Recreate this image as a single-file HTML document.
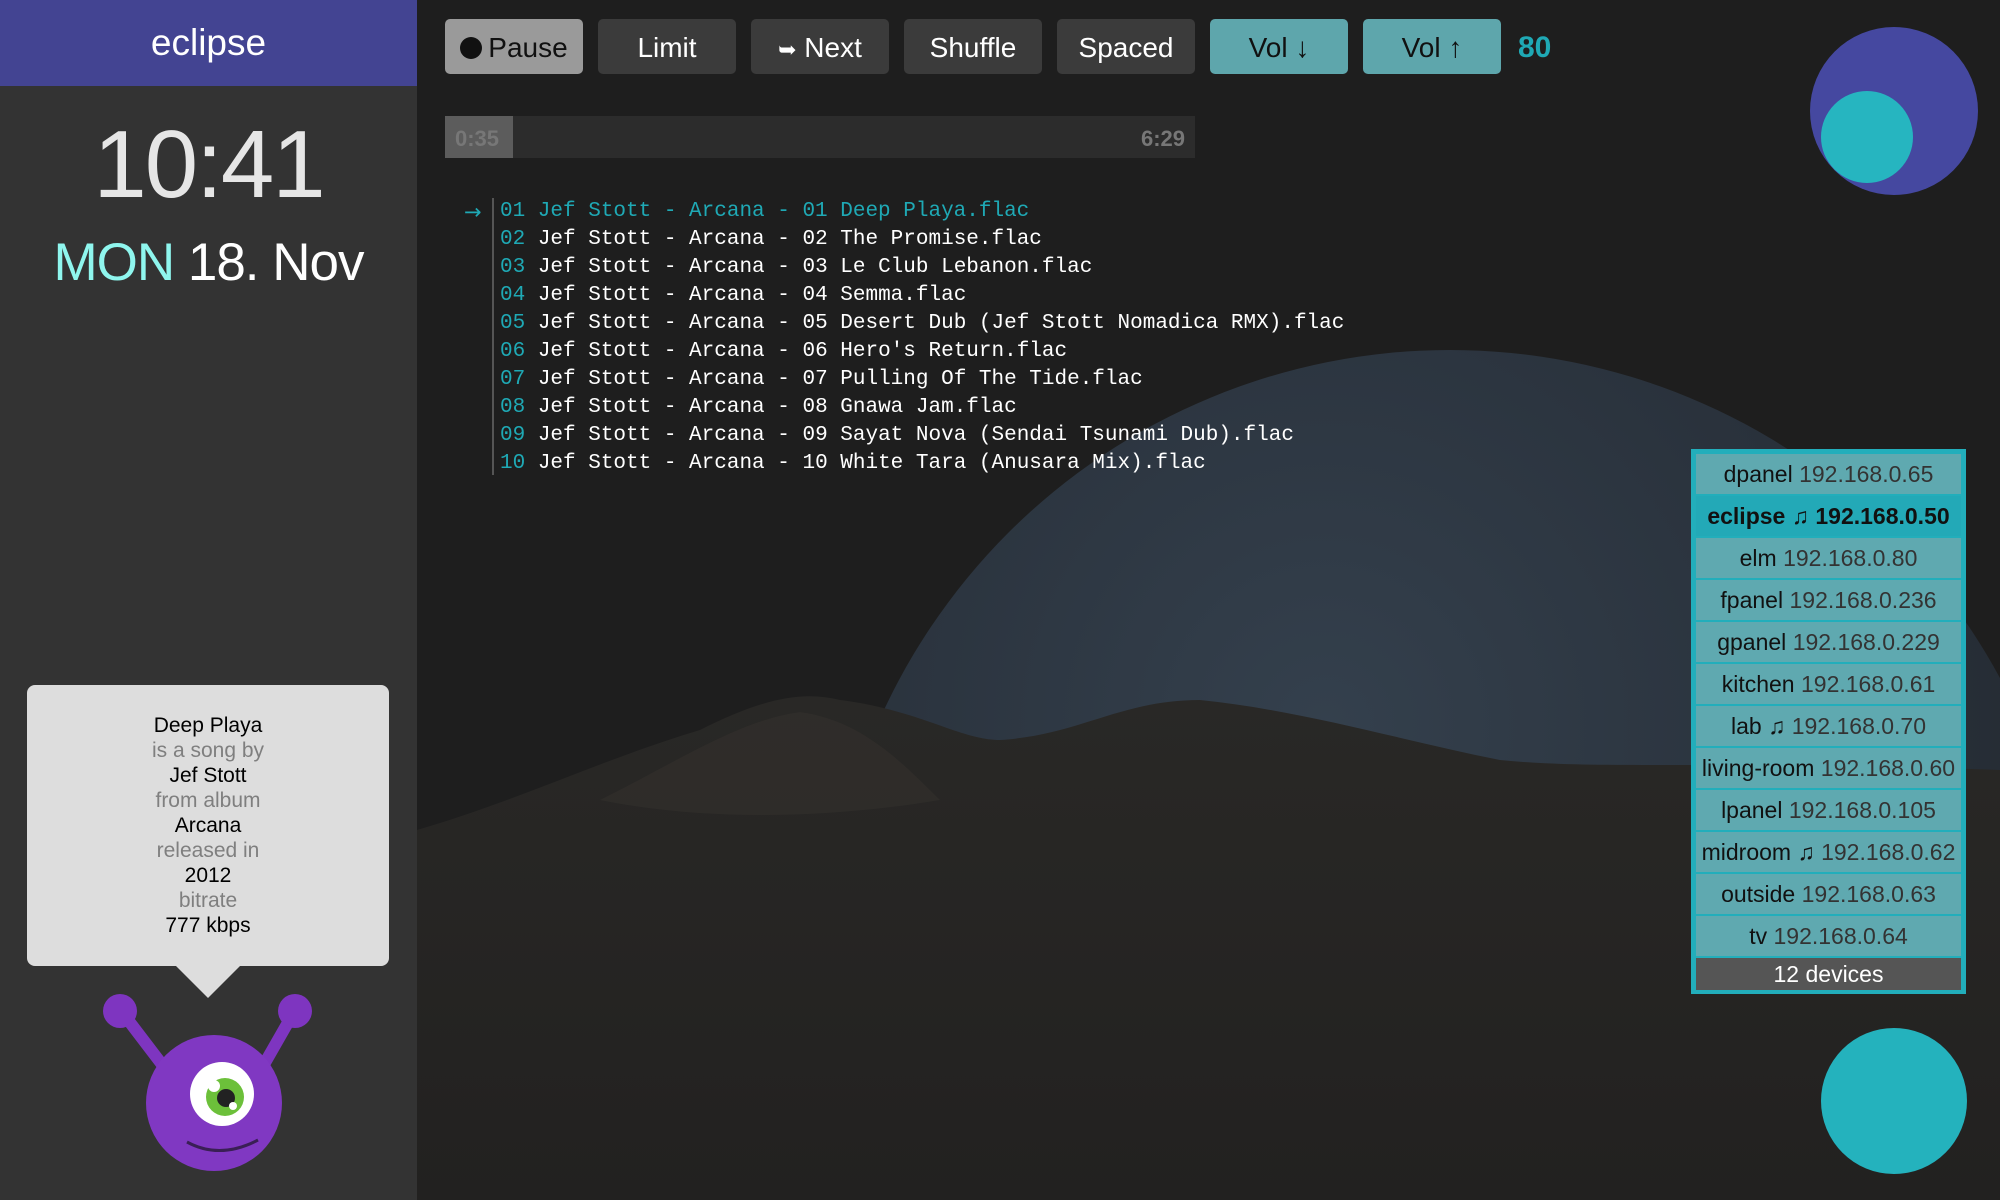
<!DOCTYPE html>
<html><head><meta charset="utf-8">
<style>
*{margin:0;padding:0;box-sizing:border-box}
html,body{width:2000px;height:1200px;overflow:hidden}
body{background:#1e1e1e;font-family:"Liberation Sans","DejaVu Sans",sans-serif;position:relative}
#bg{position:absolute;left:0;top:0}
.side{position:absolute;left:0;top:0;width:417px;height:1200px;background:#333}
.hdr{height:86px;background:#434492;color:#fff;font-size:37px;text-align:center;line-height:86px}
.clock{position:absolute;top:110px;width:417px;text-align:center;color:#e6e6e6;font-size:96px;letter-spacing:-2px}
.date{position:absolute;top:232px;width:417px;text-align:center;color:#fff;font-size:53px;letter-spacing:-1px}
.date span{color:#8ff6ee}
.bubble{position:absolute;left:27px;top:685px;width:362px;height:281px;background:#ddd;border-radius:8px;text-align:center;font-size:21px;line-height:25px;padding-top:28px;color:#000}
.bubble .g{color:#7f7f7f}
.tri{position:absolute;left:175px;top:965px;width:0;height:0;border-left:33px solid transparent;border-right:33px solid transparent;border-top:33px solid #ddd}
.btn{position:absolute;top:19px;width:138px;height:55px;border-radius:5px;background:#3b3b3b;color:#fff;font-size:28px;text-align:center;line-height:57px}
.btn.t{background:#5ea6ac;color:#111}
.btn.p{background:#9a9a9a;color:#111}
.vol{position:absolute;left:1518px;top:31px;color:#1fa9b5;font-size:30px;font-weight:bold}
.prog{position:absolute;left:445px;top:116px;width:750px;height:42px;background:#2c2c2c}
.prog .f{position:absolute;left:0;top:0;width:68px;height:42px;background:#5c5c5c}
.prog span{position:absolute;top:10px;font-size:22px;font-weight:bold;color:#777}
.pl{position:absolute;left:500px;top:198px;font-family:"Liberation Mono","DejaVu Sans Mono",monospace;font-size:21px;line-height:28px;color:#fff;white-space:pre}
.pl b{font-weight:normal;color:#1fa9b5}
.pl .c{color:#1fa9b5}
.vline{position:absolute;left:492px;top:198px;width:2px;height:277px;background:#555}
.arrow{position:absolute;left:464px;top:198px;color:#1fa9b5;font-size:21px;line-height:28px;font-family:"DejaVu Sans",sans-serif}
.dev{position:absolute;left:1691px;top:449px;width:275px;background:#22aebb;padding:5px 5px 4px 5px}
.dev div{height:40px;margin-bottom:2px;background:#5fa9b0;text-align:center;line-height:40px;font-size:23px;color:#111;white-space:nowrap}
.dev div i{font-style:normal;color:#333}
.dev div.s{background:#23a9b7;font-weight:bold}
.dev div.s i{color:#111}
.dev div.n{background:#555;color:#fff;height:32px;line-height:32px;margin:0}
</style></head><body>
<svg id="bg" width="2000" height="1200" viewBox="0 0 2000 1200">
<defs>
<radialGradient id="earth" cx="0.4" cy="0.3" r="0.7">
<stop offset="0" stop-color="#34404d"/><stop offset="0.6" stop-color="#29313b"/><stop offset="1" stop-color="#22272d"/>
</radialGradient>
<linearGradient id="ground" x1="0" y1="0" x2="0" y2="1">
<stop offset="0" stop-color="#292826"/><stop offset="1" stop-color="#222120"/>
</linearGradient>
</defs>
<circle cx="1450" cy="975" r="625" fill="url(#earth)"/>
<path d="M417 830 C520 800 600 760 700 730 C760 700 800 690 840 700 C920 710 960 740 1000 740 C1080 735 1120 700 1200 700 C1300 710 1400 740 1500 760 C1600 770 1700 760 2000 770 L2000 1200 L417 1200 Z" fill="url(#ground)"/>
<path d="M600 800 C680 760 740 720 800 712 C860 720 900 760 940 800 C820 820 700 820 600 800Z" fill="#33312d" opacity="0.6"/>
</svg>
<div class="side">
<div class="hdr">eclipse</div>
<div class="clock">10:41</div>
<div class="date"><span>MON</span> 18. Nov</div>
<div class="bubble">Deep Playa<br><span class="g">is a song by</span><br>Jef Stott<br><span class="g">from album</span><br>Arcana<br><span class="g">released in</span><br>2012<br><span class="g">bitrate</span><br>777 kbps</div>
<div class="tri"></div>
<svg style="position:absolute;left:90px;top:985px" width="240" height="190" viewBox="90 985 240 190">
<path d="M122 1012 L170 1075" stroke="#7e35c0" stroke-width="12" stroke-linecap="round"/>
<path d="M294 1012 L258 1075" stroke="#7e35c0" stroke-width="12" stroke-linecap="round"/>
<circle cx="120" cy="1011" r="17" fill="#7e35c0"/>
<circle cx="295" cy="1011" r="17" fill="#7e35c0"/>
<circle cx="214" cy="1103" r="68" fill="#8038c2"/>
<circle cx="222" cy="1094" r="32" fill="#fff"/>
<circle cx="225" cy="1097" r="19" fill="#6cc03a"/>
<circle cx="226" cy="1098" r="9" fill="#222"/>
<circle cx="214" cy="1086" r="6" fill="#fff"/>
<circle cx="233" cy="1106" r="4" fill="#fff"/>
<path d="M187 1142 Q220 1160 258 1140" stroke="#3a1f55" stroke-width="3" fill="none"/>
</svg>
</div>
<div class="btn p" style="left:445px"><span style="display:inline-block;width:22px;height:22px;border-radius:50%;background:#111;vertical-align:-2px;margin-right:6px"></span>Pause</div>
<div class="btn" style="left:598px">Limit</div>
<div class="btn" style="left:751px"><span style="font-size:22px">&#x27a5;</span> Next</div>
<div class="btn" style="left:904px">Shuffle</div>
<div class="btn" style="left:1057px">Spaced</div>
<div class="btn t" style="left:1210px">Vol <b>&#x2193;</b></div>
<div class="btn t" style="left:1363px">Vol <b>&#x2191;</b></div>
<div class="vol">80</div>
<div class="prog"><div class="f"></div><span style="left:10px">0:35</span><span style="right:10px">6:29</span></div>
<div class="arrow">&#x2192;</div>
<div class="vline"></div>
<div class="pl"><span class="c">01 Jef Stott - Arcana - 01 Deep Playa.flac</span>
<b>02</b> Jef Stott - Arcana - 02 The Promise.flac
<b>03</b> Jef Stott - Arcana - 03 Le Club Lebanon.flac
<b>04</b> Jef Stott - Arcana - 04 Semma.flac
<b>05</b> Jef Stott - Arcana - 05 Desert Dub (Jef Stott Nomadica RMX).flac
<b>06</b> Jef Stott - Arcana - 06 Hero's Return.flac
<b>07</b> Jef Stott - Arcana - 07 Pulling Of The Tide.flac
<b>08</b> Jef Stott - Arcana - 08 Gnawa Jam.flac
<b>09</b> Jef Stott - Arcana - 09 Sayat Nova (Sendai Tsunami Dub).flac
<b>10</b> Jef Stott - Arcana - 10 White Tara (Anusara Mix).flac</div>
<svg style="position:absolute;left:1800px;top:20px" width="190" height="190">
<circle cx="94" cy="91" r="84" fill="#4548a0"/>
<circle cx="67" cy="117" r="46" fill="#26b5c0"/>
</svg>
<svg style="position:absolute;left:1810px;top:1020px" width="170" height="170">
<circle cx="84" cy="81" r="73" fill="#24b2bd"/>
</svg>
<div class="dev">
<div>dpanel <i>192.168.0.65</i></div>
<div class="s">eclipse ♫ <i>192.168.0.50</i></div>
<div>elm <i>192.168.0.80</i></div>
<div>fpanel <i>192.168.0.236</i></div>
<div>gpanel <i>192.168.0.229</i></div>
<div>kitchen <i>192.168.0.61</i></div>
<div>lab ♫ <i>192.168.0.70</i></div>
<div>living-room <i>192.168.0.60</i></div>
<div>lpanel <i>192.168.0.105</i></div>
<div>midroom ♫ <i>192.168.0.62</i></div>
<div>outside <i>192.168.0.63</i></div>
<div>tv <i>192.168.0.64</i></div>
<div class="n">12 devices</div>
</div>
</body></html>
